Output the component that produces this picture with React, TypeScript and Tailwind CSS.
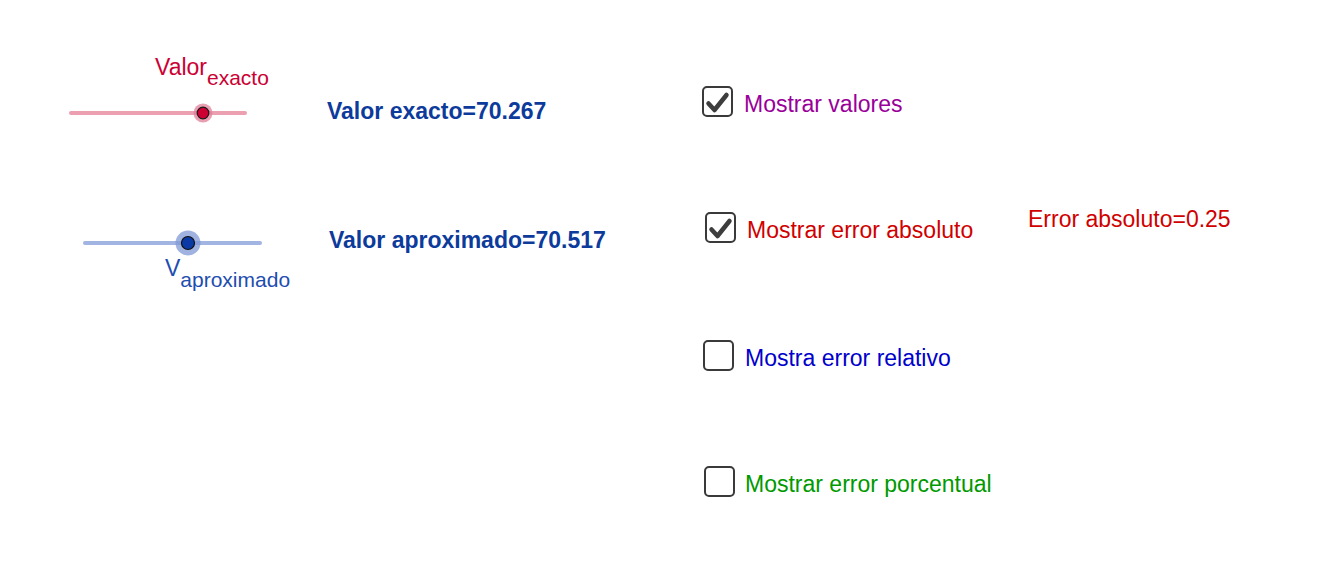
import React from 'react';

type BoxProps = { checked: boolean };

const CheckBox = ({ checked }: BoxProps) => (
  <svg width="31" height="31" viewBox="0 0 31 31" className="shrink-0">
    <rect x="1" y="1" width="29" height="29" rx="4" fill="#fff" stroke="#3a3a3a" strokeWidth="2" />
    {checked && (
      <path d="M6.5 17.5 L12.5 24 L24.5 9" fill="none" stroke="#3d3d3d" strokeWidth="4.5" strokeLinecap="round" strokeLinejoin="round" />
    )}
  </svg>
);

const App = () => {
  return (
    <div className="flex h-[575px] w-[1326px] overflow-hidden bg-white font-['Liberation_Sans',Arial,sans-serif]">
      {/* sliders */}
      <div className="flex w-[702px] shrink-0 flex-col pt-[56px]">
        <div className="flex items-end">
          <div className="flex w-[327px] shrink-0 flex-col pl-[69px]">
            <div className="h-[23px] whitespace-nowrap pl-[86px] text-[23px] leading-[23px] text-[#cc0033]">
              Valor<span className="relative top-[10px] text-[21px]">exacto</span>
            </div>
            <svg width="182" height="40" viewBox="0 0 182 40" className="mt-[14px]">
              <line x1="2" y1="20" x2="176" y2="20" stroke="#eb9fb1" strokeWidth="4" strokeLinecap="round" />
              <circle cx="134" cy="20" r="9.5" fill="#e27f98" fillOpacity="0.75" />
              <circle cx="134" cy="20" r="5.8" fill="#cc0033" stroke="#1a1a1a" strokeWidth="1.2" />
            </svg>
          </div>
          <div className="mb-[10px] whitespace-nowrap text-[23px] font-bold leading-[23px] text-[#0c3b9c]">
            Valor exacto=70.267
          </div>
        </div>

        <div className="mt-[96px] flex items-start">
          <div className="flex w-[329px] shrink-0 flex-col pl-[83px]">
            <svg width="182" height="28" viewBox="0 0 182 28">
              <line x1="2" y1="14" x2="177" y2="14" stroke="#a2b4e2" strokeWidth="4" strokeLinecap="round" />
              <circle cx="105" cy="14" r="12.5" fill="#7f98d6" fillOpacity="0.75" />
              <circle cx="105" cy="14" r="6.5" fill="#0b3aa6" stroke="#111" strokeWidth="1.2" />
            </svg>
            <div className="h-[23px] whitespace-nowrap pl-[82px] text-[23px] leading-[23px] text-[#1e4db0]">
              V<span className="relative top-[11px] text-[21px]">aproximado</span>
            </div>
          </div>
          <div className="whitespace-nowrap text-[23px] font-bold leading-[23px] text-[#0c3b9c]">
            Valor aproximado=70.517
          </div>
        </div>
      </div>

      {/* checkboxes */}
      <div className="flex flex-col pt-[86px] text-[23px] leading-[23px]">
        <div className="flex items-center gap-[11px]">
          <CheckBox checked />
          <span className="mt-[6px] whitespace-nowrap text-[#990099]">Mostrar valores</span>
        </div>

        <div className="mt-[95px] flex items-center">
          <div className="flex w-[326px] shrink-0 items-center gap-[11px] pl-[3px]">
            <CheckBox checked />
            <span className="mt-[6px] whitespace-nowrap text-[#d00000]">Mostrar error absoluto</span>
          </div>
          <span className="mt-[-16px] whitespace-nowrap text-[#d00000]">Error absoluto=0.25</span>
        </div>

        <div className="mt-[97px] flex items-center gap-[11px] pl-[1px]">
          <CheckBox checked={false} />
          <span className="mt-[6px] whitespace-nowrap text-[#0000cc]">Mostra error relativo</span>
        </div>

        <div className="mt-[95px] flex items-center gap-[10px] pl-[2px]">
          <CheckBox checked={false} />
          <span className="mt-[6px] whitespace-nowrap text-[#009900]">Mostrar error porcentual</span>
        </div>
      </div>
    </div>
  );
};

export default App;
